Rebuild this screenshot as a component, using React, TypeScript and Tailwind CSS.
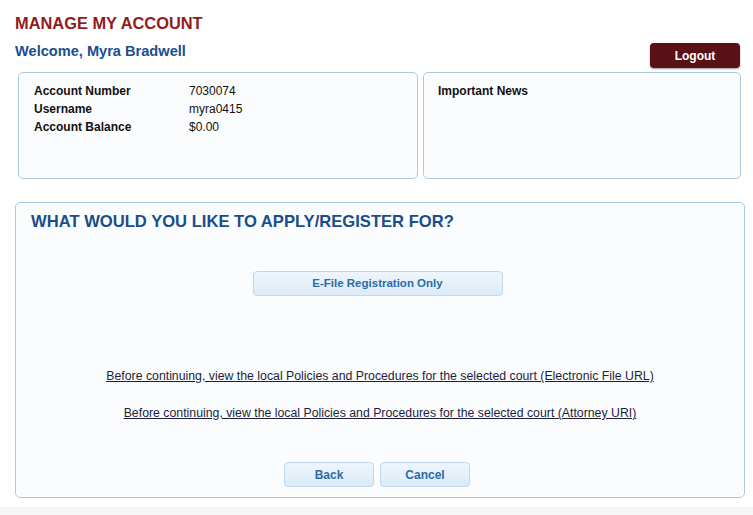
export default function App() {
  const font = { fontFamily: '"Liberation Sans", Arial, sans-serif' }
  const btn =
    'h-[25px] rounded-[4px] border border-[#bcd7ee] bg-gradient-to-b from-[#eef5fc] to-[#dcebf8] font-bold text-[#2d6ba8]'

  return (
    <div className="min-h-[515px] w-[753px] bg-white" style={font}>
      <div className="pl-[15px] pt-[12px]">
        <h1 className="text-[16.4px] font-bold leading-[22px] text-[#941b1b]">MANAGE MY ACCOUNT</h1>
      </div>

      <div className="flex items-end justify-between pl-[15px] pr-[13px] pt-[8px]">
        <p className="pb-[8px] text-[14.6px] font-bold leading-[18px] text-[#1b4f8d]">Welcome, Myra Bradwell</p>
        <button className="h-[25px] w-[90px] rounded-[4px] bg-[#5a1115] text-[12px] font-bold text-white shadow-[0_1px_2px_rgba(0,0,0,0.4)]">
          Logout
        </button>
      </div>

      <div className="ml-[18px] mt-[4px] flex gap-[5px]">
        <div className="h-[107px] w-[400px] rounded-[5px] border border-[#a9cbe6] bg-[#fbfcfd] pl-[15px] pt-[9px]">
          <div className="grid grid-cols-[155px_1fr] text-[12px] leading-[18px] text-[#111]">
            <span className="font-bold">Account Number</span>
            <span>7030074</span>
            <span className="font-bold">Username</span>
            <span>myra0415</span>
            <span className="font-bold">Account Balance</span>
            <span>$0.00</span>
          </div>
        </div>
        <div className="h-[107px] w-[318px] rounded-[5px] border border-[#a9cbe6] bg-[#fbfcfd] pl-[14px] pt-[9px]">
          <p className="text-[12px] font-bold leading-[18px] text-[#111]">Important News</p>
        </div>
      </div>

      <div className="ml-[15px] mt-[23px] flex h-[296px] w-[730px] flex-col rounded-[5px] border border-[#a9cbe6] bg-[#fbfcfd]">
        <h2 className="pl-[15px] pt-[8px] text-[16.6px] font-bold leading-[22px] text-[#1a4d8b]">
          WHAT WOULD YOU LIKE TO APPLY/REGISTER FOR?
        </h2>

        <div className="mt-[38px] flex justify-center pr-[5px]">
          <button className={`${btn} w-[250px] text-[11.5px]`}>E-File Registration Only</button>
        </div>

        <div className="mt-[73px] flex flex-col items-center gap-[23px] text-[12.3px] leading-[14px] text-[#1e1e3c]">
          <a href="#" className="underline">
            Before continuing, view the local Policies and Procedures for the selected court (Electronic File URL)
          </a>
          <a href="#" className="underline">
            Before continuing, view the local Policies and Procedures for the selected court (Attorney URI)
          </a>
        </div>

        <div className="mt-[42px] flex justify-center gap-[6px] pr-[6px]">
          <button className={`${btn} w-[90px] text-[12px]`}>Back</button>
          <button className={`${btn} w-[90px] text-[12px]`}>Cancel</button>
        </div>
      </div>

      <div className="mt-[9px] h-[9px] bg-[#f6f6f6]" />
    </div>
  )
}
